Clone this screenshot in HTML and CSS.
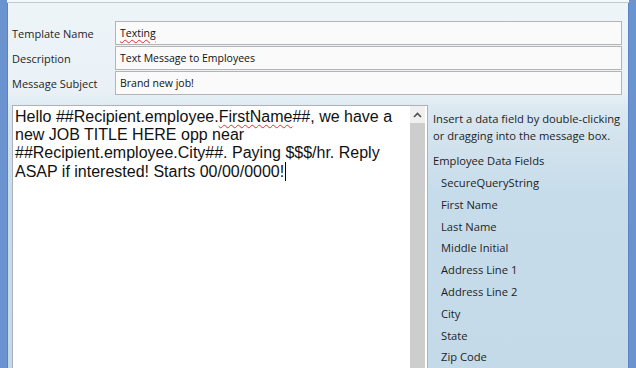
FILE: index.html
```html
<!DOCTYPE html>
<html lang="en">

<head>
    <meta charset="UTF-8">
    <title>Text Message Template</title>
    <link rel="stylesheet" href="styles.css">
</head>

<body>
    <div class="window">
        <div class="form">
            <div class="fields">
                <label class="field-label">Template Name</label>
                <div class="field-box"><span class="misspelled">Texting</span></div>
                <label class="field-label">Description</label>
                <div class="field-box">Text Message to Employees</div>
                <label class="field-label">Message Subject</label>
                <div class="field-box">Brand new job!</div>
            </div>

            <div class="editor">
                <div class="message-box">
                    <div class="message-text">Hello ##Recipient.employee.<span class="misspelled">FirstName</span>##, we have a new JOB TITLE HERE opp near ##Recipient.employee.City##. Paying $$$/hr. Reply ASAP if interested! Starts 00/00/0000!<span class="caret"></span></div>
                    <div class="scrollbar">
                        <div class="scroll-up">
                            <svg width="9" height="6" viewBox="0 0 9 6">
                                <path d="M1 5 L4.5 1.5 L8 5" fill="none" stroke="#505050" stroke-width="1.6" />
                            </svg>
                        </div>
                        <div class="scroll-thumb"></div>
                    </div>
                </div>

                <div class="data-panel">
                    <p class="hint">Insert a data field by double-clicking or dragging into the message box.</p>
                    <div class="group-title">Employee Data Fields</div>
                    <ul class="data-fields">
                        <li>SecureQueryString</li>
                        <li>First Name</li>
                        <li>Last Name</li>
                        <li>Middle Initial</li>
                        <li>Address Line 1</li>
                        <li>Address Line 2</li>
                        <li>City</li>
                        <li>State</li>
                        <li>Zip Code</li>
                    </ul>
                </div>
            </div>
        </div>
    </div>
</body>

</html>
```

FILE: styles.css
```css
html {
    height: 100%;
}

body {
    margin: 0;
    padding: 0;
    width: 636px;
    height: 368px;
    overflow: hidden;
    font-family: "Open Sans", "Noto Sans", sans-serif;
    font-size: 11.2px;
    color: #1e1e1e;
}

.window {
    display: flex;
    height: 368px;
    border-left: 7px solid #6b93d0;
    border-right: 8px solid #6b93d0;
    box-sizing: border-box;
}

.form {
    flex: 1;
    display: flex;
    flex-direction: column;
    border-top: 2px solid #f6f9fb;
    box-shadow: inset 0 1px 0 #b9cadd, inset -1px 0 0 #5c84c2, inset 1px 0 0 #5c84c2;
    background: linear-gradient(180deg, #eef5f9 0, #e9f1f6 90px, #d9e7f0 110px, #c7dcea 190px, #c4dae8 100%);
}

.fields {
    display: grid;
    grid-template-columns: 103px 507px;
    row-gap: 1px;
    align-items: center;
    padding: 19px 0 0 5px;
}

.field-label {
    font-size: 11px;
}

.field-box {
    height: 24px;
    line-height: 22px;
    padding-left: 4px;
    border: 1px solid #b4b4b4;
    background: #fafafa;
    box-sizing: border-box;
    font-size: 10.5px;
    color: #111;
}

.misspelled {
    text-decoration: underline wavy #e03030;
    text-decoration-thickness: 1px;
    text-underline-offset: 2px;
}

.editor {
    flex: 1;
    display: flex;
    margin-top: 10px;
    padding-left: 5px;
}

.message-box {
    width: 416px;
    display: flex;
    border: 1px solid #aeb1b6;
    border-bottom: none;
    background: #fff;
    box-sizing: border-box;
}

.message-text {
    flex: 1;
    padding: 2px 2px 0 2px;
    font-family: "Liberation Sans", Arial, sans-serif;
    font-size: 16px;
    line-height: 18px;
    color: #111;
}

.caret {
    display: inline-block;
    width: 0;
    height: 19px;
    margin-left: 1px;
    border-left: 1px solid #000;
    vertical-align: -4px;
}

.scrollbar {
    width: 15px;
    margin-right: 2px;
    display: flex;
    flex-direction: column;
}

.scroll-up {
    height: 17px;
    display: flex;
    align-items: center;
    justify-content: center;
    background: #f0f0f0;
}

.scroll-thumb {
    flex: 1;
    background: #cdcdcd;
}

.data-panel {
    flex: 1;
    padding: 5px 0 0 5px;
}

.hint {
    margin: 0;
    width: 196px;
    line-height: 17px;
}

.group-title {
    margin-top: 8px;
    line-height: 18px;
}

.data-fields {
    list-style: none;
    margin: 2px 0 0;
    padding: 0 0 0 8px;
}

.data-fields li {
    line-height: 21.8px;
}
```
